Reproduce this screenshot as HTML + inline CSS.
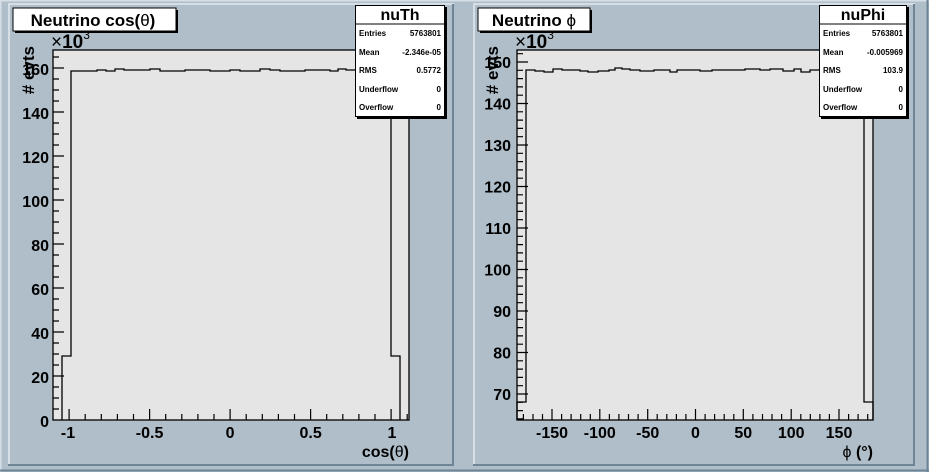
<!DOCTYPE html>
<html><head><meta charset="utf-8"><style>
html,body{margin:0;padding:0;background:#afbec9;}
svg{display:block;font-family:"Liberation Sans",sans-serif;font-weight:bold;}
</style></head><body>
<svg width="929" height="472" viewBox="0 0 929 472" xmlns="http://www.w3.org/2000/svg">
<rect x="0" y="0" width="929" height="472" fill="#afbec9"/>
<path d="M0,0.5H929M0.5,0V472" stroke="#d6dfe6" stroke-width="2"/>
<path d="M0,470.5H929M927.5,0V472" stroke="#6e8597" stroke-width="2"/>
<path d="M8,4H454M9,4V466" stroke="#d6dfe6" stroke-width="2" fill="none"/>
<path d="M8,465H454M453,4V466" stroke="#6e8597" stroke-width="2" fill="none"/>
<path d="M473,4H915M474,4V466" stroke="#d6dfe6" stroke-width="2" fill="none"/>
<path d="M473,465H915M914,4V466" stroke="#6e8597" stroke-width="2" fill="none"/>

<rect x="53" y="50" width="356" height="370" fill="#e5e5e5" stroke="#000" stroke-width="1.3"/>
<path d="M62,420V356H71V71H97V70H106V71H115V69H124V70H150V69H160V71H185V70H210V71H230V70H240V71H260V69H270V70H280V71H305V70H330V71H338V69H346V70H391V356H400V420" fill="none" stroke="#000" stroke-width="1.3"/>
<path stroke="#000" stroke-width="1.2" fill="none" d="
M69.1,420V409M149.6,420V409M230.1,420V409M310.6,420V409M391.1,420V409
M85.2,420V414M101.3,420V414M117.4,420V414M133.5,420V414M165.7,420V414M181.8,420V414M197.9,420V414M214,420V414M246.2,420V414M262.3,420V414M278.4,420V414M294.5,420V414M326.7,420V414M342.8,420V414M358.9,420V414M375,420V414M407.2,420V414
M53,376H64M53,332H64M53,288H64M53,244H64M53,200H64M53,156H64M53,112H64M53,68H64
M53,409H59M53,398H59M53,387H59M53,365H59M53,354H59M53,343H59M53,321H59M53,310H59M53,299H59M53,277H59M53,266H59M53,255H59M53,233H59M53,222H59M53,211H59M53,189H59M53,178H59M53,167H59M53,145H59M53,134H59M53,123H59M53,101H59M53,90H59M53,79H59M53,57H59"/>
<g font-size="16" text-anchor="end">
<text x="49" y="427">0</text><text x="49" y="383">20</text><text x="49" y="339">40</text><text x="49" y="295">60</text><text x="49" y="251">80</text><text x="49" y="207">100</text><text x="49" y="163">120</text><text x="49" y="119">140</text><text x="49" y="75">160</text>
</g>
<g font-size="16" text-anchor="middle">
<text x="68" y="438">-1</text><text x="149.6" y="438">-0.5</text><text x="230.1" y="438">0</text><text x="310.6" y="438">0.5</text><text x="392" y="438">1</text>
</g>
<text x="409" y="457" font-size="16" text-anchor="end">cos(<tspan font-weight="normal">θ</tspan>)</text>
<text x="34" y="46" font-size="17" text-anchor="end" transform="rotate(-90 34 46)"># evts</text>
<text x="51" y="48" font-size="19" font-weight="normal">×<tspan font-weight="bold">10</tspan><tspan font-size="12" dy="-9">3</tspan></text>
<rect x="15" y="10" width="163" height="23" fill="#000"/>
<rect x="13" y="8" width="163" height="23" fill="#fff" stroke="#000" stroke-width="1"/>
<text x="93" y="26" font-size="17" text-anchor="middle">Neutrino cos(<tspan font-weight="normal">θ</tspan>)</text>
<rect x="357" y="7" width="90" height="112" fill="#000"/>
<rect x="355.5" y="5.5" width="89" height="111" fill="#fff" stroke="#000" stroke-width="1"/>
<path d="M355.5,24H444.5" stroke="#000"/>
<text x="400" y="20" font-size="16" text-anchor="middle">nuTh</text>
<g font-size="8">
<text x="359" y="36">Entries</text><text x="359" y="55">Mean</text><text x="359" y="73">RMS</text><text x="359" y="92">Underflow</text><text x="359" y="110">Overflow</text>
</g>
<g font-size="8" text-anchor="end">
<text x="441" y="36">5763801</text><text x="441" y="55">-2.346e-05</text><text x="441" y="73">0.5772</text><text x="441" y="92">0</text><text x="441" y="110">0</text>
</g>

<rect x="517" y="50" width="356" height="370" fill="#e5e5e5" stroke="#000" stroke-width="1.3"/>
<path d="M517,420V402H526V70H535V71H544V72H553V69H562V70H580V71H588V72H598V71H609V70H615V68H622V69H630V70H640V71H654V70H670V72H677V70H700V71H712V70H745V69H760V70H770V69H783V71H794V69H801V72H810V70H830V69H845V70H864V402H873V420" fill="none" stroke="#000" stroke-width="1.3"/>
<path stroke="#000" stroke-width="1.2" fill="none" d="
M552,420V409M599.8,420V409M647.7,420V409M695.5,420V409M743.3,420V409M791.2,420V409M839,420V409
M523.4,420V414M533,420V414M542.5,420V414M561.6,420V414M571.1,420V414M580.7,420V414M590.3,420V414M609.4,420V414M618.9,420V414M628.5,420V414M638.1,420V414M657.2,420V414M666.8,420V414M676.4,420V414M685.9,420V414M705.1,420V414M714.6,420V414M724.2,420V414M733.8,420V414M752.9,420V414M762.5,420V414M772,420V414M781.6,420V414M800.8,420V414M810.3,420V414M819.9,420V414M829.4,420V414M848.6,420V414M858.1,420V414M867.7,420V414
M517,394H528M517,352.5H528M517,311H528M517,269.5H528M517,228H528M517,186.5H528M517,145H528M517,103.5H528M517,62H528
M517,418.9H523M517,410.6H523M517,402.3H523
M517,385.7H523M517,377.4H523M517,369.1H523M517,360.8H523
M517,344.2H523M517,335.9H523M517,327.6H523M517,319.3H523
M517,302.7H523M517,294.4H523M517,286.1H523M517,277.8H523
M517,261.2H523M517,252.9H523M517,244.6H523M517,236.3H523
M517,219.7H523M517,211.4H523M517,203.1H523M517,194.8H523
M517,178.2H523M517,169.9H523M517,161.6H523M517,153.3H523
M517,136.7H523M517,128.4H523M517,120.1H523M517,111.8H523
M517,95.2H523M517,86.9H523M517,78.6H523M517,70.3H523
M517,53.7H523"/>
<g font-size="16" text-anchor="end">
<text x="511" y="400">70</text><text x="511" y="358.5">80</text><text x="511" y="317">90</text><text x="511" y="275.5">100</text><text x="511" y="234">110</text><text x="511" y="192.5">120</text><text x="511" y="151">130</text><text x="511" y="109.5">140</text><text x="511" y="68">150</text>
</g>
<g font-size="16" text-anchor="middle">
<text x="552" y="438">-150</text><text x="599.8" y="438">-100</text><text x="647.7" y="438">-50</text><text x="695.5" y="438">0</text><text x="743.3" y="438">50</text><text x="791.2" y="438">100</text><text x="839" y="438">150</text>
</g>
<text x="873" y="457" font-size="16" text-anchor="end"><tspan font-weight="normal">ϕ</tspan>  (°)</text>
<text x="498" y="46" font-size="17" text-anchor="end" transform="rotate(-90 498 46)"># evts</text>
<text x="515" y="48" font-size="19" font-weight="normal">×<tspan font-weight="bold">10</tspan><tspan font-size="12" dy="-9">3</tspan></text>
<rect x="480" y="10" width="112" height="23" fill="#000"/>
<rect x="478" y="8" width="112" height="23" fill="#fff" stroke="#000" stroke-width="1"/>
<text x="534" y="26" font-size="17" text-anchor="middle">Neutrino <tspan font-weight="normal">ϕ</tspan></text>
<rect x="821" y="7" width="88" height="112" fill="#000"/>
<rect x="819.5" y="5.5" width="87" height="111" fill="#fff" stroke="#000" stroke-width="1"/>
<path d="M819.5,24H906.5" stroke="#000"/>
<text x="863" y="20" font-size="16" text-anchor="middle">nuPhi</text>
<g font-size="8">
<text x="823" y="36">Entries</text><text x="823" y="55">Mean</text><text x="823" y="73">RMS</text><text x="823" y="92">Underflow</text><text x="823" y="110">Overflow</text>
</g>
<g font-size="8" text-anchor="end">
<text x="903" y="36">5763801</text><text x="903" y="55">-0.005969</text><text x="903" y="73">103.9</text><text x="903" y="92">0</text><text x="903" y="110">0</text>
</g>
</svg>
</body></html>
